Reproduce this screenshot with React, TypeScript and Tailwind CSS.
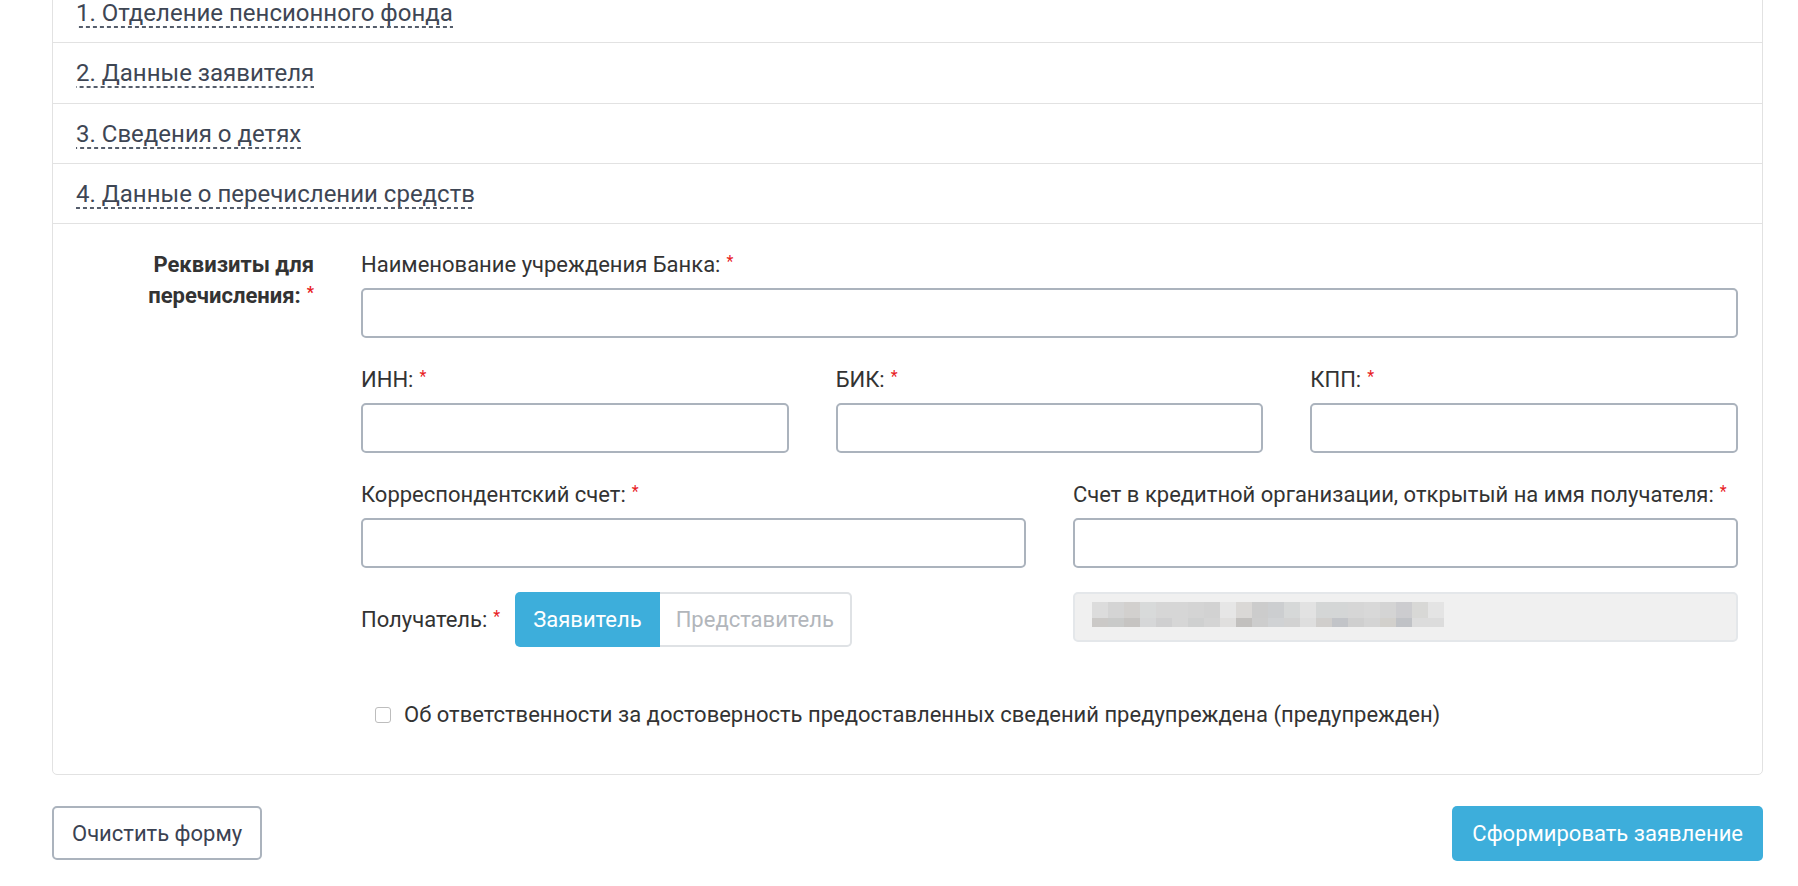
import React from "react";

const sections = [
  "1. Отделение пенсионного фонда",
  "2. Данные заявителя",
  "3. Сведения о детях",
  "4. Данные о перечислении средств",
];

// pixelated (hidden) recipient name, two rows of cells
const blurTop = [
  "bg-[#dcdcdc]", "bg-[#d4d4d4]", "bg-[#d2d0ce]", "bg-[#d8dada]", "bg-[#d6d6d6]", "bg-[#d6d6d6]",
  "bg-[#d4d4d4]", "bg-[#d2d2d2]", "bg-[#e6e6e6]", "bg-[#dad8d6]", "bg-[#cccccc]", "bg-[#ccced0]",
  "bg-[#d6d8d8]", "bg-[#e2e2e2]", "bg-[#d4d6d6]", "bg-[#d4d6d6]", "bg-[#d6d6d6]", "bg-[#d8d8d8]",
  "bg-[#d4d4d4]", "bg-[#cccccf]", "bg-[#d8d8d6]", "bg-[#e4e4e4]",
];
const blurBottom = [
  "bg-[#cbc9c7]", "bg-[#c9cac9]", "bg-[#c6c4c2]", "bg-[#d6d7d8]", "bg-[#cfcfd0]", "bg-[#d6d6d6]",
  "bg-[#cfd0d0]", "bg-[#d4d4d4]", "bg-[#e0dfde]", "bg-[#c2c0be]", "bg-[#cdcdcd]", "bg-[#d0d2d4]",
  "bg-[#d2d2d2]", "bg-[#dedede]", "bg-[#d0cecc]", "bg-[#c2c4c8]", "bg-[#cfcfcf]", "bg-[#d4d4d4]",
  "bg-[#d2d0cc]", "bg-[#c0c2c6]", "bg-[#dcdcdc]", "bg-[#dcdcdc]",
];

function Req() {
  return <span className="ml-[6px] text-[16px] leading-none text-[#e8201e] align-[5px]">*</span>;
}

function Field({ label }: { label: string }) {
  return (
    <div className="flex flex-col">
      <label className="h-[31px] leading-[31px] text-[#333]">
        {label}
        <Req />
      </label>
      <input
        type="text"
        className="mt-[8px] h-[50px] w-full rounded-[5px] border-2 border-[#abb3bd] bg-white px-3 outline-none"
      />
    </div>
  );
}

export default function App() {
  return (
    <div className="min-h-screen bg-white font-[Roboto,sans-serif] text-[22px] text-[#333]">
      <div className="ml-[52px] mr-[35px]">
        <div className="mt-[-18px] rounded-b-[5px] border border-[#e2e2e2]">
          {sections.map((s) => (
            <div key={s} className="border-b border-[#e2e2e2] pb-[14.33px] pl-[23px] pt-[16px] text-[24px] leading-[29px] text-[#3e4654]">
              <span className="bg-[linear-gradient(to_right,#555d6b_0,#555d6b_4px,transparent_4px)] bg-[length:7px_2px] bg-bottom bg-repeat-x pb-[1px]">
                {s}
              </span>
            </div>
          ))}

          <div className="flex gap-[47px] px-[24px] pb-[44px] pt-[25px]">
            <div className="w-[237px] shrink-0 text-right font-bold leading-[31px] text-[#333]">
              Реквизиты для
              <br />
              перечисления:
              <Req />
            </div>

            <div className="flex flex-1 flex-col">
              <Field label="Наименование учреждения Банка:" />

              <div className="mt-[26px] grid grid-cols-3 gap-x-[47px]">
                <Field label="ИНН:" />
                <Field label="БИК:" />
                <Field label="КПП:" />
              </div>

              <div className="mt-[26px] grid grid-cols-2 gap-x-[47px]">
                <Field label="Корреспондентский счет:" />
                <Field label="Счет в кредитной организации, открытый на имя получателя:" />
              </div>

              <div className="mt-[24px] grid grid-cols-2 items-start gap-x-[47px]">
                <div className="flex h-[55px] items-center">
                  <span className="leading-[31px]">
                    Получатель:
                    <Req />
                  </span>
                  <div className="ml-[15px] flex h-[55px]">
                    <button className="h-full rounded-l-[5px] bg-[#3daedb] px-[18px] text-white">Заявитель</button>
                    <button className="h-full rounded-r-[5px] border-2 border-l-0 border-[#dfe2e5] bg-white px-[16px] text-[#b2b6bb]">
                      Представитель
                    </button>
                  </div>
                </div>
                <div className="h-[50px] rounded-[5px] border-2 border-[#e4e7ea] bg-[#f0f0f0] pl-[17px] pt-[8px]">
                  <div className="flex">
                    {blurTop.map((c, i) => (
                      <div key={i} className={"h-[16px] w-[16px] " + c} />
                    ))}
                  </div>
                  <div className="flex">
                    {blurBottom.map((c, i) => (
                      <div key={i} className={"h-[9px] w-[16px] " + c} />
                    ))}
                  </div>
                </div>
              </div>

              <label className="mt-[52px] flex items-center gap-[13px] pl-[14px] leading-[31px]">
                <span className="h-[16px] w-[16px] shrink-0 rounded-[3px] border border-[#bdbdbd] bg-white" />
                Об ответственности за достоверность предоставленных сведений предупреждена (предупрежден)
              </label>
            </div>
          </div>
        </div>

        <div className="mt-[31px] flex items-start justify-between">
          <button className="h-[54px] rounded-[5px] border-2 border-[#abb3bd] bg-white px-[18px] text-[#3b4252]">
            Очистить форму
          </button>
          <button className="h-[55px] rounded-[5px] bg-[#3daedb] px-[20px] text-white">Сформировать заявление</button>
        </div>
      </div>
    </div>
  );
}
